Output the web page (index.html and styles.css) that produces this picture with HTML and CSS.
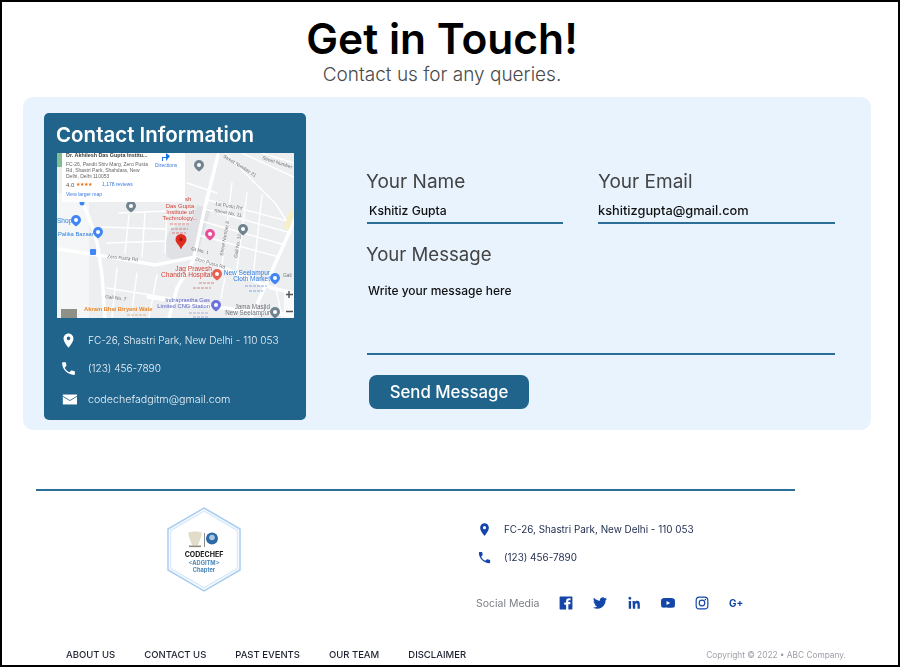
FILE: index.html
```html
<!DOCTYPE html>
<html lang="en">
<head>
<meta charset="utf-8">
<title>Get in Touch</title>
<link rel="stylesheet" href="styles.css">
</head>
<body>
<div class="frame">
  <header class="head">
    <h1 class="title">Get in Touch!</h1>
    <p class="subtitle">Contact us for any queries.</p>
  </header>

  <section class="panel">
    <aside class="card">
      <h2 class="card-title">Contact Information</h2>
      <svg class="map" viewBox="0 0 237 165" width="237" height="165">
        <rect width="237" height="165" fill="#eceef0"/>
        <rect x="0" y="40" width="32" height="125" fill="#f5f6f7"/>
        <path d="M112 78l8-6 12 0 8-20 14 4-14 46-20 6-10-4-2-14z" fill="#dfe1e4"/>
        <rect x="0" y="0" width="5" height="14" fill="#7fbf8f"/>
        <g fill="none" stroke="#fff" stroke-linecap="round">
          <g stroke-width="3.5">
            <path d="M22 40C30 60 41 85 42 102L45 122L48 165"/>
            <path d="M0 96L41 102L98 112L138 104L171 117L215 135L237 140"/>
            <path d="M161 2L148 54L138 100L136 108L120 135L112 165"/>
            <path d="M240 60L231 82L201 149L194 165"/>
            <path d="M91 144L158 154L237 162"/>
          </g>
          <g stroke-width="1.400">
            <path d="M168 0L218 50L231 70M151 47L238 70M148 56L234 80M144 68L228 92M141 82L222 104"/>
            <path d="M175 30L165 112M190 40L180 116M205 42L196 124"/>
            <path d="M62 60L110 58L108 100M72 62L68 100M88 60L85 104M45 74L108 76M50 90L108 88"/>
            <path d="M185 0L237 24M205 0L237 10M130 30L160 40"/>
            <path d="M60 115L55 165M80 120L74 165M100 122L92 165M50 135L112 145"/>
            <path d="M168 125L164 145M215 115L225 165"/>
          </g>
        </g>
        <path d="M236 58L229 76" stroke="#f6efc8" stroke-width="6"/>

        <g class="m-road">
          <text x="50" y="105" transform="rotate(6 50 105)">Zero Pusta Rd</text>
          <text x="138" y="107" transform="rotate(17 138 107)">Zero Pusta Rd</text>
          <text x="158" y="52" transform="rotate(10 158 52)">1st Pusta Rd</text>
          <text x="157" y="59" transform="rotate(10 157 59)">Street No. 11</text>
          <text x="166" y="4" transform="rotate(32 166 4)">Street Number 21</text>
          <text x="205" y="6" transform="rotate(18 205 6)">Street Number</text>
          <text x="134" y="97" transform="rotate(14 134 97)">Gt No. 1</text>
          <text x="48" y="145" transform="rotate(8 48 145)">Gali No. 7</text>
          <text x="166" y="103" transform="rotate(-80 166 103)">Street Number 8</text>
          <text x="180" y="105" transform="rotate(-80 180 105)">Gali No. 12</text>
          <text x="226" y="124">Gali</text>
        </g>

        <g class="m-red">
          <text x="123" y="48" text-anchor="middle">Akhilesh</text>
          <text x="123" y="54.500" text-anchor="middle">Das Gupta</text>
          <text x="123" y="60.500" text-anchor="middle">Institute of</text>
          <text x="123" y="66.500" text-anchor="middle">Technology...</text>
          <text x="155" y="118" text-anchor="end" class="m-big">Jag Pravesh</text>
          <text x="155" y="124" text-anchor="end" class="m-big">Chandra Hospital</text>
        </g>
        <g class="m-blue">
          <text x="0" y="70">Shop</text>
          <text x="1" y="83" class="m-small">Palika Bazaar</text>
          <text x="213" y="122" text-anchor="end">New Seelampur</text>
          <text x="213" y="128" text-anchor="end">Cloth Market</text>
        </g>
        <g class="m-violet">
          <text x="153" y="149" text-anchor="end">Indraprastha Gas</text>
          <text x="153" y="155" text-anchor="end">Limited CNG Station</text>
        </g>
        <text x="27" y="158" class="m-orange">Akram Bhai Biryani Wale</text>
        <g class="m-gray">
          <text x="213" y="156" text-anchor="end">Jama Masjid</text>
          <text x="213" y="162" text-anchor="end">New Seelampur</text>
        </g>
        <g class="m-scrib" fill="none" stroke-dasharray="3 1">
          <path d="M113 71h19M114 76h17M115 80h14" stroke="#d4443a"/>
          <path d="M142 130h16M136 135h18" stroke="#d4443a"/>
          <path d="M188 133h22M192 138h14" stroke="#2f7fe0"/>
          <path d="M132 160h20M136 164h16" stroke="#8a80cc"/>
          <path d="M70 162h20" stroke="#e8872c"/>
        </g>

        <g fill="#4285f4">
          <path d="M19 62a5 5 0 0 1 5 5c0 3-5 6.500-5 6.500s-5-3.500-5-6.500a5 5 0 0 1 5-5z"/>
          <path d="M41 74a5 5 0 0 1 5 5c0 3-5 6.500-5 6.500s-5-3.500-5-6.500a5 5 0 0 1 5-5z"/>
          <path d="M218 120a5 5 0 0 1 5 5c0 3-5 6.500-5 6.500s-5-3.500-5-6.500a5 5 0 0 1 5-5z"/>
          <rect x="33" y="96" width="6" height="6" rx="1"/>
          <circle cx="25" cy="50" r="2.500"/>
          <path d="M108 -2h3l3 4-3 5-2-1 1-4h-3z"/>
        </g>
        <g fill="#70848f">
          <path d="M74 48a5 5 0 0 1 5 5c0 3-5 6.500-5 6.500s-5-3.500-5-6.500a5 5 0 0 1 5-5z"/>
          <path d="M186 71a5 5 0 0 1 5 5c0 3-5 6.500-5 6.500s-5-3.500-5-6.500a5 5 0 0 1 5-5z"/>
          <path d="M142 7a5 5 0 0 1 5 5c0 3-5 6.500-5 6.500s-5-3.500-5-6.500a5 5 0 0 1 5-5z"/>
          <path d="M218 154a5 5 0 0 1 5 5c0 3-5 6.500-5 6.500s-5-3.500-5-6.500a5 5 0 0 1 5-5z"/>
        </g>
        <path d="M153 76a5 5 0 0 1 5 5c0 3-5 6.500-5 6.500s-5-3.500-5-6.500a5 5 0 0 1 5-5z" fill="#ea4f9a"/>
        <path d="M160 116a5 5 0 0 1 5 5c0 3-5 6.500-5 6.500s-5-3.500-5-6.500a5 5 0 0 1 5-5z" fill="#e8604f"/>
        <path d="M159 147a5 5 0 0 1 5 5c0 3-5 6.500-5 6.500s-5-3.500-5-6.500a5 5 0 0 1 5-5z" fill="#6c72d8"/>
        <g fill="#fff">
          <circle cx="19" cy="67" r="2"/><circle cx="41" cy="79" r="2"/><circle cx="218" cy="125" r="2"/>
          <circle cx="74" cy="53" r="2"/><circle cx="186" cy="76" r="2"/><circle cx="142" cy="12" r="2"/>
          <circle cx="218" cy="159" r="2"/><circle cx="153" cy="81" r="2"/><circle cx="160" cy="121" r="2"/><circle cx="159" cy="152" r="2"/>
        </g>
        <path d="M124 81a5.500 5.500 0 0 1 5.500 5.500c0 3.500-4 5.500-5.500 10-1.500-4.500-5.500-6.500-5.500-10A5.500 5.500 0 0 1 124 81z" fill="#e02b20"/>
        <circle cx="124" cy="86.500" r="1.800" fill="#a31610"/>

        <rect x="5" y="0" width="123" height="49" fill="#fff"/>
        <text x="9" y="4" class="m-head">Dr. Akhilesh Das Gupta Institu...</text>
        <g class="m-addr">
          <text x="9" y="12.500">FC-26, Pandit Shiv Marg, Zero Pusta</text>
          <text x="9" y="18.500">Rd, Shastri Park, Shahdara, New</text>
          <text x="9" y="24.500">Delhi, Delhi 110053</text>
        </g>
        <text x="9" y="33.500" class="m-rate">4.0</text>
        <text x="19" y="33" class="m-star">★★★★</text>
        <text x="45" y="33" class="m-link">1,178 reviews</text>
        <text x="9" y="43" class="m-link">View larger map</text>
        <path d="M109 0l4 3-4 5v-3h-3v3h-1v-4h4z" fill="#1a73e8"/>
        <text x="98" y="14" class="m-link">Directions</text>

        <rect x="4" y="156" width="16" height="9" fill="#8f9187"/>
        <rect x="227" y="139" width="10" height="26" fill="#fff" fill-opacity=".7"/>
        <path d="M232 138v7M229 141.500h7M229 158.500h7" stroke="#555" stroke-width="1.500"/>
      </svg>

      <ul class="card-list">
        <li class="info-row">
          <svg class="ic" viewBox="0 0 24 24"><path d="M12 2C8.130 2 5 5.130 5 9c0 5.250 7 13 7 13s7-7.750 7-13c0-3.870-3.130-7-7-7zm0 9.500a2.500 2.500 0 0 1 0-5 2.500 2.500 0 0 1 0 5z"/></svg>
          <span>FC-26, Shastri Park, New Delhi - 110 053</span>
        </li>
        <li class="info-row">
          <svg class="ic" viewBox="0 0 24 24"><path d="M6.620 10.790c1.440 2.830 3.760 5.140 6.590 6.590l2.200-2.200c.27-.27.67-.36 1.020-.24 1.120.37 2.330.57 3.570.57.55 0 1 .45 1 1V20c0 .55-.45 1-1 1-9.390 0-17-7.610-17-17 0-.55.45-1 1-1h3.500c.55 0 1 .45 1 1 0 1.250.2 2.450.57 3.570.11.35.03.74-.25 1.020l-2.200 2.200z"/></svg>
          <span>(123) 456-7890</span>
        </li>
        <li class="info-row info-mail">
          <svg class="ic" viewBox="-2 0 24 24"><path d="M2 5h20v14H2z"/><path class="ic-fold" d="M2 7.500l10 6 10-6"/></svg>
          <span>codechefadgitm@gmail.com</span>
        </li>
      </ul>
    </aside>

    <form class="form">
      <div class="field-row">
        <label class="field field-name">
          <span class="label">Your Name</span>
          <input class="input" type="text" value="Kshitiz Gupta">
        </label>
        <label class="field field-email">
          <span class="label label-email">Your Email</span>
          <input class="input input-email" type="text" value="kshitizgupta@gmail.com">
        </label>
      </div>
      <label class="field field-msg">
        <span class="label label-msg">Your Message</span>
        <textarea class="textarea" rows="3">Write your message here</textarea>
      </label>
      <button class="send" type="button">Send Message</button>
    </form>
  </section>

  <footer class="footer">
    <div class="footer-main">
      <div class="logo-col">
        <svg class="logo" viewBox="0 0 74 85" width="74" height="85">
          <path d="M37 1L73 22v41L37 84 1 63V22z" fill="#fff" stroke="#a9cdf0" stroke-width="1.500"/>
          <path d="M37 4L70.500 23.500v38L37 81 3.500 61.500v-38z" fill="none" stroke="#dcebfa" stroke-width="1.500"/>
          <path d="M21 26c2-2 12-2 14 0l-2 7-2 5h-6l-2-5z" fill="#e3dccb"/>
          <rect x="22" y="38.500" width="12" height="1.600" fill="#8d8a7c"/>
          <rect x="37" y="26" width="1" height="14" fill="#8a8a8a"/>
          <circle cx="45" cy="31.500" r="6" fill="#2c6aa6"/>
          <circle cx="45" cy="30.500" r="2.800" fill="#a8c8e4"/>
          <text x="37" y="49.500" text-anchor="middle" class="logo-a">CODECHEF</text>
          <text x="37" y="57.500" text-anchor="middle" class="logo-b">&lt;ADGITM&gt;</text>
          <text x="37" y="65" text-anchor="middle" class="logo-b">Chapter</text>
        </svg>
      </div>
      <div class="foot-info">
        <div class="foot-row">
          <svg class="ic-blue" viewBox="0 0 24 24"><path d="M12 2C8.130 2 5 5.130 5 9c0 5.250 7 13 7 13s7-7.750 7-13c0-3.870-3.130-7-7-7zm0 9.500a2.500 2.500 0 0 1 0-5 2.500 2.500 0 0 1 0 5z"/></svg>
          <span>FC-26, Shastri Park, New Delhi - 110 053</span>
        </div>
        <div class="foot-row">
          <svg class="ic-blue" viewBox="0 0 24 24"><path d="M6.620 10.790c1.440 2.830 3.760 5.140 6.590 6.590l2.200-2.200c.27-.27.67-.36 1.020-.24 1.120.37 2.330.57 3.570.57.55 0 1 .45 1 1V20c0 .55-.45 1-1 1-9.390 0-17-7.610-17-17 0-.55.45-1 1-1h3.500c.55 0 1 .45 1 1 0 1.250.2 2.450.57 3.570.11.35.03.74-.25 1.020l-2.200 2.200z"/></svg>
          <span>(123) 456-7890</span>
        </div>
        <div class="social">
          <span class="social-label">Social Media</span>
          <div class="social-icons">
            <svg class="soc" viewBox="0 0 24 24"><path d="M2 1h20a1 1 0 0 1 1 1v20a1 1 0 0 1-1 1h-6v-9h3.200l.5-3.700H16V8.900c0-1.100.3-1.800 1.800-1.800h2V3.800c-.4 0-1.500-.1-2.800-.1-2.900 0-4.800 1.700-4.800 4.900v2.700H9V15h3.200v8H2a1 1 0 0 1-1-1V2a1 1 0 0 1 1-1z"/></svg>
            <svg class="soc" viewBox="0 0 24 24"><path d="M23.950 4.570a10 10 0 0 1-2.820.77 4.960 4.960 0 0 0 2.160-2.720c-.95.55-2 .96-3.120 1.190a4.920 4.920 0 0 0-8.380 4.480C7.690 8.090 4.070 6.130 1.640 3.160a4.820 4.820 0 0 0-.67 2.480c0 1.710.87 3.210 2.190 4.100a4.900 4.900 0 0 1-2.230-.62v.06a4.920 4.920 0 0 0 3.950 4.830 5 5 0 0 1-2.210.08 4.940 4.940 0 0 0 4.600 3.420A9.870 9.870 0 0 1 0 19.540a14 14 0 0 0 7.560 2.210c9.050 0 14-7.500 14-13.980 0-.21 0-.42-.02-.63a9.940 9.940 0 0 0 2.460-2.550l-.05-.02z"/></svg>
            <svg class="soc" viewBox="0 0 24 24"><path d="M4.980 1.500a2.500 2.500 0 1 1-.02 5 2.500 2.500 0 0 1 .02-5zM3 8.500h4V22H3zM9.500 8.500h3.800v1.900h.1c.5-1 1.800-2.200 3.800-2.200 4 0 4.800 2.600 4.800 6.100V22h-4v-6.500c0-1.300 0-3-1.800-3s-2.100 1.400-2.100 2.900V22h-4z"/></svg>
            <svg class="soc" viewBox="0 0 24 24"><path d="M23.500 6.200a3 3 0 0 0-2.100-2.100C19.500 3.500 12 3.500 12 3.500s-7.500 0-9.400.6A3 3 0 0 0 .5 6.200C0 8.100 0 12 0 12s0 3.900.5 5.800a3 3 0 0 0 2.100 2.100c1.900.6 9.400.6 9.400.6s7.500 0 9.400-.6a3 3 0 0 0 2.100-2.100c.5-1.900.5-5.800.5-5.800s0-3.900-.5-5.800zM9.500 15.600V8.400l6.300 3.600z"/></svg>
            <svg class="soc soc-line" viewBox="0 0 24 24"><rect x="2" y="2" width="20" height="20" rx="5.500"/><circle cx="12" cy="12" r="4.800"/><circle class="soc-dot" cx="17.800" cy="6.200" r="1.300"/></svg>
            <span class="gplus">G+</span>
          </div>
        </div>
      </div>
    </div>
    <div class="foot-bar">
      <nav class="foot-nav">
        <a class="foot-link">ABOUT US</a>
        <a class="foot-link">CONTACT US</a>
        <a class="foot-link">PAST EVENTS</a>
        <a class="foot-link">OUR TEAM</a>
        <a class="foot-link">DISCLAIMER</a>
      </nav>
      <span class="copy">Copyright © 2022 • ABC Company.</span>
    </div>
  </footer>
</div>
</body>
</html>
```
FILE: styles.css
```css
* { box-sizing: border-box; }
html, body { margin: 0; padding: 0; }
body {
  width: 900px;
  height: 667px;
  overflow: hidden;
  background: #fff;
  font-family: Inter, "Open Sans", "Liberation Sans", sans-serif;
}
.frame {
  width: 900px;
  height: 667px;
  border: 2px solid #000;
  overflow: hidden;
  display: flex;
  flex-direction: column;
}
.head { padding: 11px 16px 0 0; text-align: center; height: 95px; flex: none; }
.title {
  margin: 0;
  font-size: 42.500px;
  line-height: 52px;
  font-weight: 600;
  color: #000;
}
.subtitle {
  margin: -1px 0 0;
  font-size: 19px;
  line-height: 22px;
  font-weight: 300;
  color: #4a4a4a;
}

/* contact panel */
.panel {
  margin: 0 27px 0 21px;
  height: 333px;
  flex: none;
  padding: 16px 36px 10px 21px;
  background: #e8f3fe;
  border-radius: 10px;
  display: flex;
  gap: 61px;
  filter: blur(.25px);
}
.card {
  width: 262px;
  height: 307px;
  flex: none;
  padding: 9px 12px 0 13px;
  background: #20648c;
  border-radius: 5px;
  color: #fff;
}
.card-title {
  margin: 0 0 6px -1px;
  font-size: 20.500px;
  line-height: 25px;
  font-weight: 600;
}
.map { display: block; filter: blur(.4px); }
.map text { font-family: "Liberation Sans", Arial, sans-serif; }
.m-road text { font-size: 4.800px; fill: #6f7378; }
.m-red text { font-size: 6px; fill: #d4443a; }
.m-red .m-big { font-size: 6.600px; }
.m-blue text { font-size: 6.500px; fill: #2f7fe0; }
.m-blue .m-small { font-size: 5.800px; }
.m-violet text { font-size: 5.800px; fill: #5a62c0; }
.m-orange { font-size: 5.800px; font-weight: 700; fill: #e8872c; }
.m-gray text { font-size: 6.300px; fill: #6f7378; }
.m-scrib { stroke-width: 1.200; stroke-opacity: .6; }
.m-head { font-size: 5.400px; font-weight: 700; fill: #3c3c3c; }
.m-addr text { font-size: 5px; fill: #666; }
.m-rate { font-size: 6px; fill: #555; }
.m-star { font-size: 4.800px; fill: #e7711b; }
.m-link { font-size: 5px; fill: #3b7be0; }

.card-list { list-style: none; margin: 8px 0 0; padding: 0 0 0 3px; }
.info-row {
  height: 28px;
  display: flex;
  align-items: center;
  gap: 11px;
  font-size: 10.100px;
  font-weight: 300;
  color: #eef4f8;
}
.info-mail { margin-top: 3px; font-size: 10.700px; }
.ic { width: 17px; height: 17px; fill: #fff; flex: none; }
.ic-fold { fill: none; stroke: #20648c; stroke-width: 1.200; }

/* form */
.form { width: 468px; padding-top: 57px; flex: none; }
.field-row { display: flex; gap: 35px; }
.field { display: flex; flex-direction: column; }
.field-name { width: 196px; }
.field-email { width: 237px; }
.label {
  font-size: 19px;
  line-height: 24px;
  font-weight: 400;
  color: #444;
  margin-left: -1px;
}
.label-email { margin-left: 0; }
.input {
  width: 100%;
  height: 30px;
  padding: 4px 2px 0;
  border: 0;
  border-bottom: 2px solid #2b6f99;
  background: transparent;
  font: 500 12.200px Inter, sans-serif;
  color: #111;
  outline: 0;
}
.input-email { padding-left: 0; font-size: 12.800px; }
.field-msg { margin-top: 18px; }
.label-msg { font-size: 18.600px; }
.textarea {
  width: 100%;
  height: 89px;
  margin-top: 0;
  padding: 17px 1px 0;
  border: 0;
  border-bottom: 2px solid #2b6f99;
  background: transparent;
  font: 500 12px/16px Inter, sans-serif;
  color: #111;
  resize: none;
  outline: 0;
  overflow: hidden;
  display: block;
}
.send {
  display: block;
  margin: 20px 0 0 2px;
  width: 160px;
  height: 34px;
  padding: 0;
  border: 0;
  border-radius: 8px;
  background: #20648c;
  color: #fff;
  font: 500 16.800px Inter, sans-serif;
}

/* footer */
.footer { flex: 1; display: flex; flex-direction: column; min-height: 0; filter: blur(.25px); }
.footer-main {
  margin: 59px 0 0 34px;
  width: 759px;
  height: 160px;
  flex: none;
  border-top: 2px solid #2b6f99;
  display: flex;
}
.logo-col { width: 442px; padding: 16px 0 0 131px; flex: none; }
.logo { display: block; }
.logo-a { font-size: 7px; font-weight: 700; fill: #111; }
.logo-b { font-size: 5.700px; font-weight: 700; fill: #4b86b8; }
.foot-info { padding: 24px 0 0 0; flex: 1; }
.foot-row {
  height: 28px;
  display: flex;
  align-items: center;
  gap: 12.500px;
  margin-left: -1.500px;
  font-size: 9.900px;
  color: #1d2a4d;
}
.ic-blue { width: 15px; height: 15px; fill: #1346a8; flex: none; }
.social { margin-top: 22px; display: flex; align-items: center; height: 20px; margin-left: -2px; }
.social-label { width: 83px; font-size: 10.500px; color: #7c7f87; white-space: nowrap; }
.social-icons { display: flex; align-items: center; gap: 20px; }
.soc { width: 14px; height: 14px; fill: #1346a8; flex: none; }
.soc-line { fill: none; stroke: #1346a8; stroke-width: 2; }
.soc-dot { fill: #1346a8; stroke: none; }
.gplus { width: 14px; font-size: 10px; font-weight: 700; color: #1346a8; line-height: 14px; white-space: nowrap; }

.foot-bar {
  flex: 1;
  display: flex;
  align-items: flex-end;
  justify-content: space-between;
  padding: 0 52px 5px 64px;
}
.foot-nav { display: flex; gap: 29px; }
.foot-link { font-size: 9.500px; line-height: 12px; font-weight: 500; color: #1d2230; }
.copy { font-size: 8.300px; line-height: 12px; color: #9a9ea6; }
```
